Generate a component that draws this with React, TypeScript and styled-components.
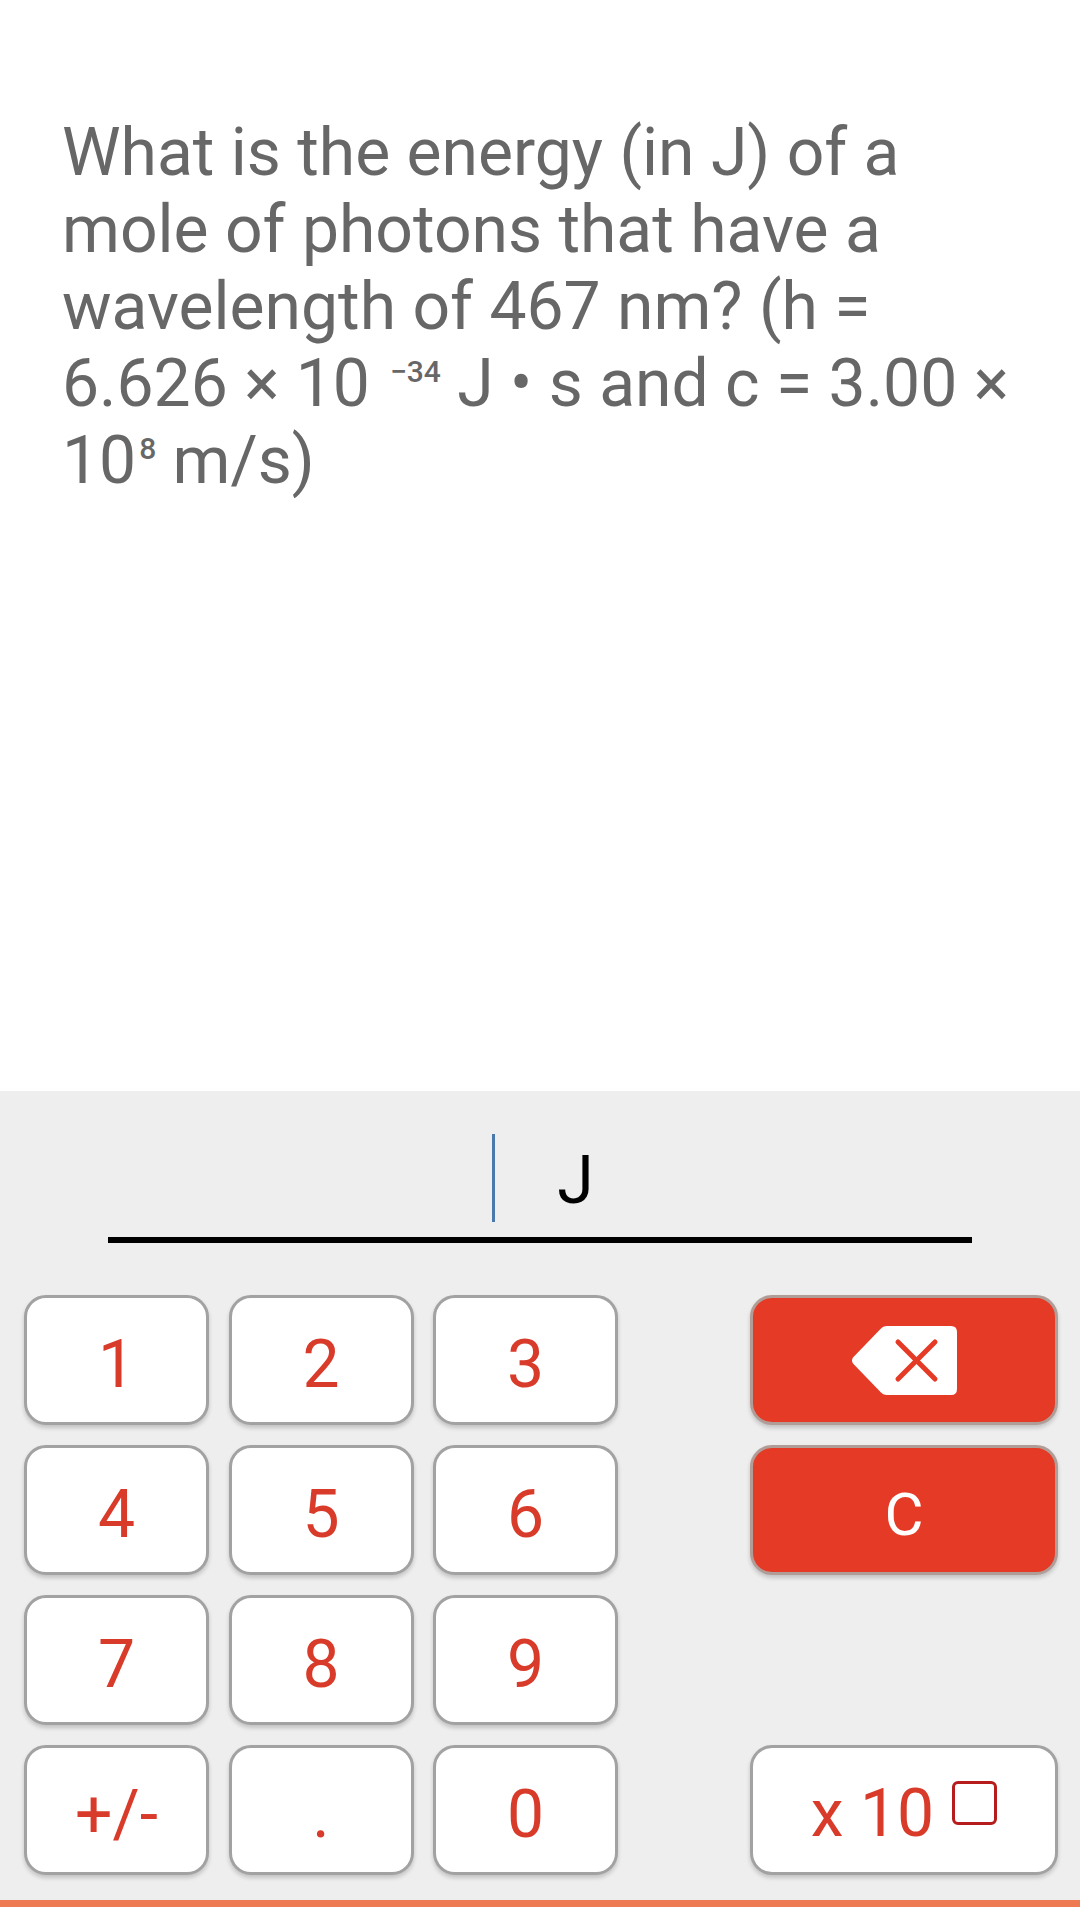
import React from "react";
import styled, { createGlobalStyle } from "styled-components";

const GlobalStyle = createGlobalStyle`
  html, body {
    margin: 0;
    padding: 0;
    background: #ffffff;
  }
  body {
    font-family: Roboto, "Noto Sans", "Liberation Sans", sans-serif;
  }
  * { box-sizing: border-box; }
`;

const Page = styled.div`
  width: 1080px;
  min-height: 1907px;
  display: flex;
  flex-direction: column;
  background: #ffffff;
`;

const QuestionArea = styled.section`
  height: 1091px;
  padding: 114px 58px 0 62px;
  background: #ffffff;
`;

const QuestionText = styled.p`
  margin: 0;
  font-size: 66px;
  line-height: 77px;
  color: #676767;
  font-weight: 400;
`;

const Sup = styled.span<{ $lead?: number }>`
  font-size: 30px;
  font-weight: 500;
  line-height: 1;
  vertical-align: 24px;
  margin-left: ${(p) => p.$lead ?? 4}px;
`;

const Panel = styled.section`
  background: #eeeeee;
  padding: 43px 0 25px;
  display: flex;
  flex-direction: column;
`;

const AnswerRow = styled.div`
  height: 88px;
  display: flex;
  justify-content: center;
  align-items: center;
  gap: 62px;
  padding-left: 6px;
`;

const Caret = styled.span`
  width: 3px;
  height: 88px;
  background: #4a7aad;
`;

const Unit = styled.span`
  font-size: 66px;
  line-height: 66px;
  color: #000000;
  margin-top: 6px;
`;

const Underline = styled.div`
  height: 6px;
  background: #000000;
  margin: 15px 108px 0;
`;

const Keypad = styled.div`
  margin-top: 52px;
  padding: 0 22px 0 24px;
  display: flex;
  justify-content: space-between;
`;

const DigitGrid = styled.div`
  display: grid;
  grid-template-columns: repeat(3, 185px);
  grid-auto-rows: 130px;
  column-gap: 19.5px;
  row-gap: 20px;
`;

const ActionColumn = styled.div`
  width: 308px;
  display: grid;
  grid-template-rows: repeat(4, 130px);
  row-gap: 20px;
`;

const KeyBase = styled.button`
  margin: 0;
  border: 3px solid #a2a2a2;
  border-radius: 22px;
  background: #ffffff;
  box-shadow: 0 3px 4px rgba(0, 0, 0, 0.18);
  font-family: Roboto, "Noto Sans", sans-serif;
  font-size: 66px;
  font-weight: 400;
  color: #d93b2a;
  display: flex;
  align-items: center;
  justify-content: center;
  padding: 8px 0 0;
  cursor: pointer;
`;

const DigitKey = styled(KeyBase)``;

const ActionKey = styled(KeyBase)<{ $row: number; $danger?: boolean }>`
  grid-row: ${(p) => p.$row};
  background: ${(p) => (p.$danger ? "#e53a25" : "#ffffff")};
  border-color: ${(p) => (p.$danger ? "#b09d98" : "#a2a2a2")};
  color: ${(p) => (p.$danger ? "#ffffff" : "#d93b2a")};
`;

const ClearLabel = styled.span`
  font-size: 60px;
`;

const ExpLabel = styled.span`
  display: flex;
  align-items: flex-start;
`;

const ExpText = styled.span`
  line-height: 66px;
`;

const ExpBox = styled.span`
  width: 45px;
  height: 44px;
  border: 3px solid #b71c1c;
  border-radius: 6px;
  margin-left: 18px;
`;

const BottomBar = styled.div`
  height: 7px;
  background: #ee7a52;
`;

const BackspaceIcon = () => (
  <svg width="106" height="69" viewBox="0 0 106 69" style={{ marginTop: -8 }}>
    <path
      d="M36 0 H100 Q106 0 106 6 V63 Q106 69 100 69 H36 Q32 69 29.5 66 L2 37.5 Q0 34.5 2 31.5 L29.5 3 Q32 0 36 0 Z"
      fill="#ffffff"
    />
    <line x1="47" y1="16" x2="84" y2="53" stroke="#e53a25" strokeWidth="5" strokeLinecap="round" />
    <line x1="84" y1="16" x2="47" y2="53" stroke="#e53a25" strokeWidth="5" strokeLinecap="round" />
  </svg>
);

const digits = ["1", "2", "3", "4", "5", "6", "7", "8", "9", "+/-", ".", "0"];

export default function App() {
  return (
    <Page>
      <GlobalStyle />
      <QuestionArea>
        <QuestionText>
          What is the energy (in J) of a mole of photons that have a wavelength of 467 nm? (h = 6.626 × 10
          <Sup $lead={20}>−34</Sup> J • s and c = 3.00 × 10<Sup $lead={3}>8</Sup> m/s)
        </QuestionText>
      </QuestionArea>
      <Panel>
        <AnswerRow>
          <Caret />
          <Unit>J</Unit>
        </AnswerRow>
        <Underline />
        <Keypad>
          <DigitGrid>
            {digits.map((d) => (
              <DigitKey key={d}>{d}</DigitKey>
            ))}
          </DigitGrid>
          <ActionColumn>
            <ActionKey $row={1} $danger aria-label="backspace">
              <BackspaceIcon />
            </ActionKey>
            <ActionKey $row={2} $danger>
              <ClearLabel>C</ClearLabel>
            </ActionKey>
            <ActionKey $row={4}>
              <ExpLabel>
                <ExpText>x 10</ExpText>
                <ExpBox />
              </ExpLabel>
            </ActionKey>
          </ActionColumn>
        </Keypad>
      </Panel>
      <BottomBar />
    </Page>
  );
}
